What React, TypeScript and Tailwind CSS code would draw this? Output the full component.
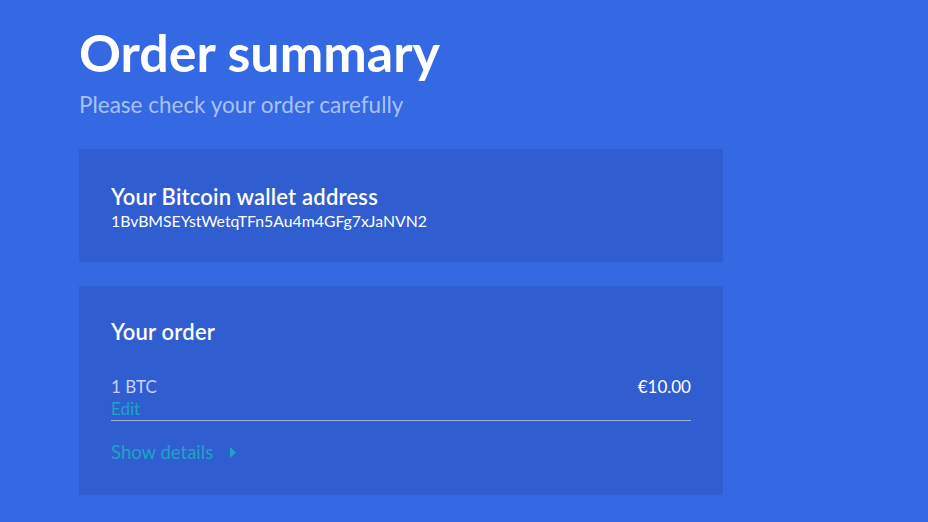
export default function App() {
  return (
    <div className="min-h-[522px] w-full bg-[#3569e4] pl-[79px] pt-[22px] font-['Lato',sans-serif]">
      <div className="w-[644px]">
        <h1 className="text-[52px] font-bold leading-[60px] text-white">Order summary</h1>
        <p className="mt-[10px] text-[22.5px] leading-[26px] text-[#a9c1f4]">Please check your order carefully</p>

        <div className="mt-[31px] bg-[#305dcf] px-[32px] pb-[31px] pt-[35px]">
          <h2 className="text-[22px] font-semibold leading-[26px] tracking-[0.2px] text-white">Your Bitcoin wallet address</h2>
          <p className="mt-[1px] text-[15.8px] leading-[20px] text-white">1BvBMSEYstWetqTFn5Au4m4GFg7xJaNVN2</p>
        </div>

        <div className="mt-[24px] bg-[#305dcf] px-[32px] pb-[32px] pt-[33px]">
          <h2 className="text-[22px] font-semibold leading-[26px] tracking-[0.2px] text-white">Your order</h2>
          <div className="mt-[31px] flex items-start justify-between border-b border-[#9fb4e8]">
            <div>
              <p className="text-[17px] leading-[22px] text-[#c5d3f6]">1 BTC</p>
              <p className="text-[17px] leading-[22px] text-[#1ea3c9]">Edit</p>
            </div>
            <p className="text-[17px] leading-[22px] text-white">€10.00</p>
          </div>
          <div className="mt-[20px] flex items-center gap-[17px] text-[18.5px] leading-[22px] text-[#1ea3c9]">
            <span>Show details</span>
            <svg width="6" height="11" viewBox="0 0 6 11" className="fill-[#1ea3c9]">
              <path d="M0 0 L6 5.5 L0 11 Z" />
            </svg>
          </div>
        </div>
      </div>
    </div>
  )
}
